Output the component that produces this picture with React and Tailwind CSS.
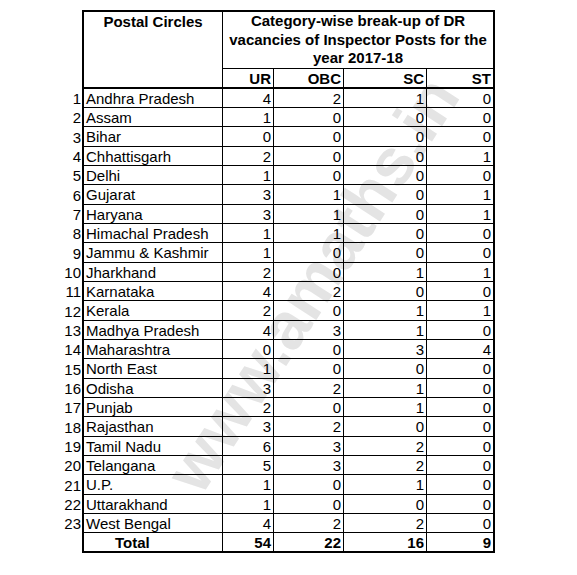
import React from "react";

const rows = [
  ["Andhra Pradesh", 4, 2, 1, 0],
  ["Assam", 1, 0, 0, 0],
  ["Bihar", 0, 0, 0, 0],
  ["Chhattisgarh", 2, 0, 0, 1],
  ["Delhi", 1, 0, 0, 0],
  ["Gujarat", 3, 1, 0, 1],
  ["Haryana", 3, 1, 0, 1],
  ["Himachal Pradesh", 1, 1, 0, 0],
  ["Jammu & Kashmir", 1, 0, 0, 0],
  ["Jharkhand", 2, 0, 1, 1],
  ["Karnataka", 4, 2, 0, 0],
  ["Kerala", 2, 0, 1, 1],
  ["Madhya Pradesh", 4, 3, 1, 0],
  ["Maharashtra", 0, 0, 3, 4],
  ["North East", 1, 0, 0, 0],
  ["Odisha", 3, 2, 1, 0],
  ["Punjab", 2, 0, 1, 0],
  ["Rajasthan", 3, 2, 0, 0],
  ["Tamil Nadu", 6, 3, 2, 0],
  ["Telangana", 5, 3, 2, 0],
  ["U.P.", 1, 0, 1, 0],
  ["Uttarakhand", 1, 0, 0, 0],
  ["West Bengal", 4, 2, 2, 0],
];

export default function App() {
  return (
    <div className="relative w-[577px] h-[575px] bg-white overflow-hidden font-['Liberation_Sans',Arial,sans-serif] text-black text-[15px] leading-none">
      <div className="absolute left-[312px] top-[284px] -translate-x-1/2 -translate-y-1/2 -rotate-[57deg] whitespace-nowrap text-[66px] font-bold text-[#e4e4e4] select-none">
        www.amaths.in
      </div>
      <div className="relative pt-[10px] grid grid-cols-[82px_141px_51px_70px_83px_68px] grid-rows-[59px_20px_repeat(8,19px_19px_20px)]">
        <div className="row-span-2"></div>
        <div className="row-span-2 border-l-2 border-t-2 border-r border-b-2 border-black font-bold text-center pt-[2px]">
          Postal Circles
        </div>
        <div className="col-span-4 border-t-2 border-r-2 border-b border-black font-bold text-center leading-[18.5px] pt-0">
          Category-wise break-up of DR
          <br />
          vacancies of Inspector Posts for the
          <br />
          year 2017-18
        </div>
        <div className="border-r border-b-2 border-black font-bold flex items-center justify-end pr-[2px]">UR</div>
        <div className="border-r border-b-2 border-black font-bold flex items-center justify-end pr-[2px]">OBC</div>
        <div className="border-r border-b-2 border-black font-bold flex items-center justify-end pr-[2px]">SC</div>
        <div className="border-r-2 border-b-2 border-black font-bold flex items-center justify-end pr-[2px]">ST</div>
        {rows.map((r, i) => (
          <React.Fragment key={i}>
            <div className="flex items-center justify-end pr-[1px]">{i + 1}</div>
            <div className="border-l-2 border-r border-b border-black flex items-center pl-[2px] whitespace-nowrap">{r[0]}</div>
            <div className="border-r border-b border-black flex items-center justify-end pr-[2px]">{r[1]}</div>
            <div className="border-r border-b border-black flex items-center justify-end pr-[2px]">{r[2]}</div>
            <div className="border-r border-b border-black flex items-center justify-end pr-[2px]">{r[3]}</div>
            <div className="border-r-2 border-b border-black flex items-center justify-end pr-[2px]">{r[4]}</div>
          </React.Fragment>
        ))}
        <div></div>
        <div className="border-l-2 border-r border-b-2 border-black flex items-center pl-[31px] font-bold">Total</div>
        <div className="border-r border-b-2 border-black flex items-center justify-end pr-[2px] font-bold">54</div>
        <div className="border-r border-b-2 border-black flex items-center justify-end pr-[2px] font-bold">22</div>
        <div className="border-r border-b-2 border-black flex items-center justify-end pr-[2px] font-bold">16</div>
        <div className="border-r-2 border-b-2 border-black flex items-center justify-end pr-[2px] font-bold">9</div>
      </div>
    </div>
  );
}
